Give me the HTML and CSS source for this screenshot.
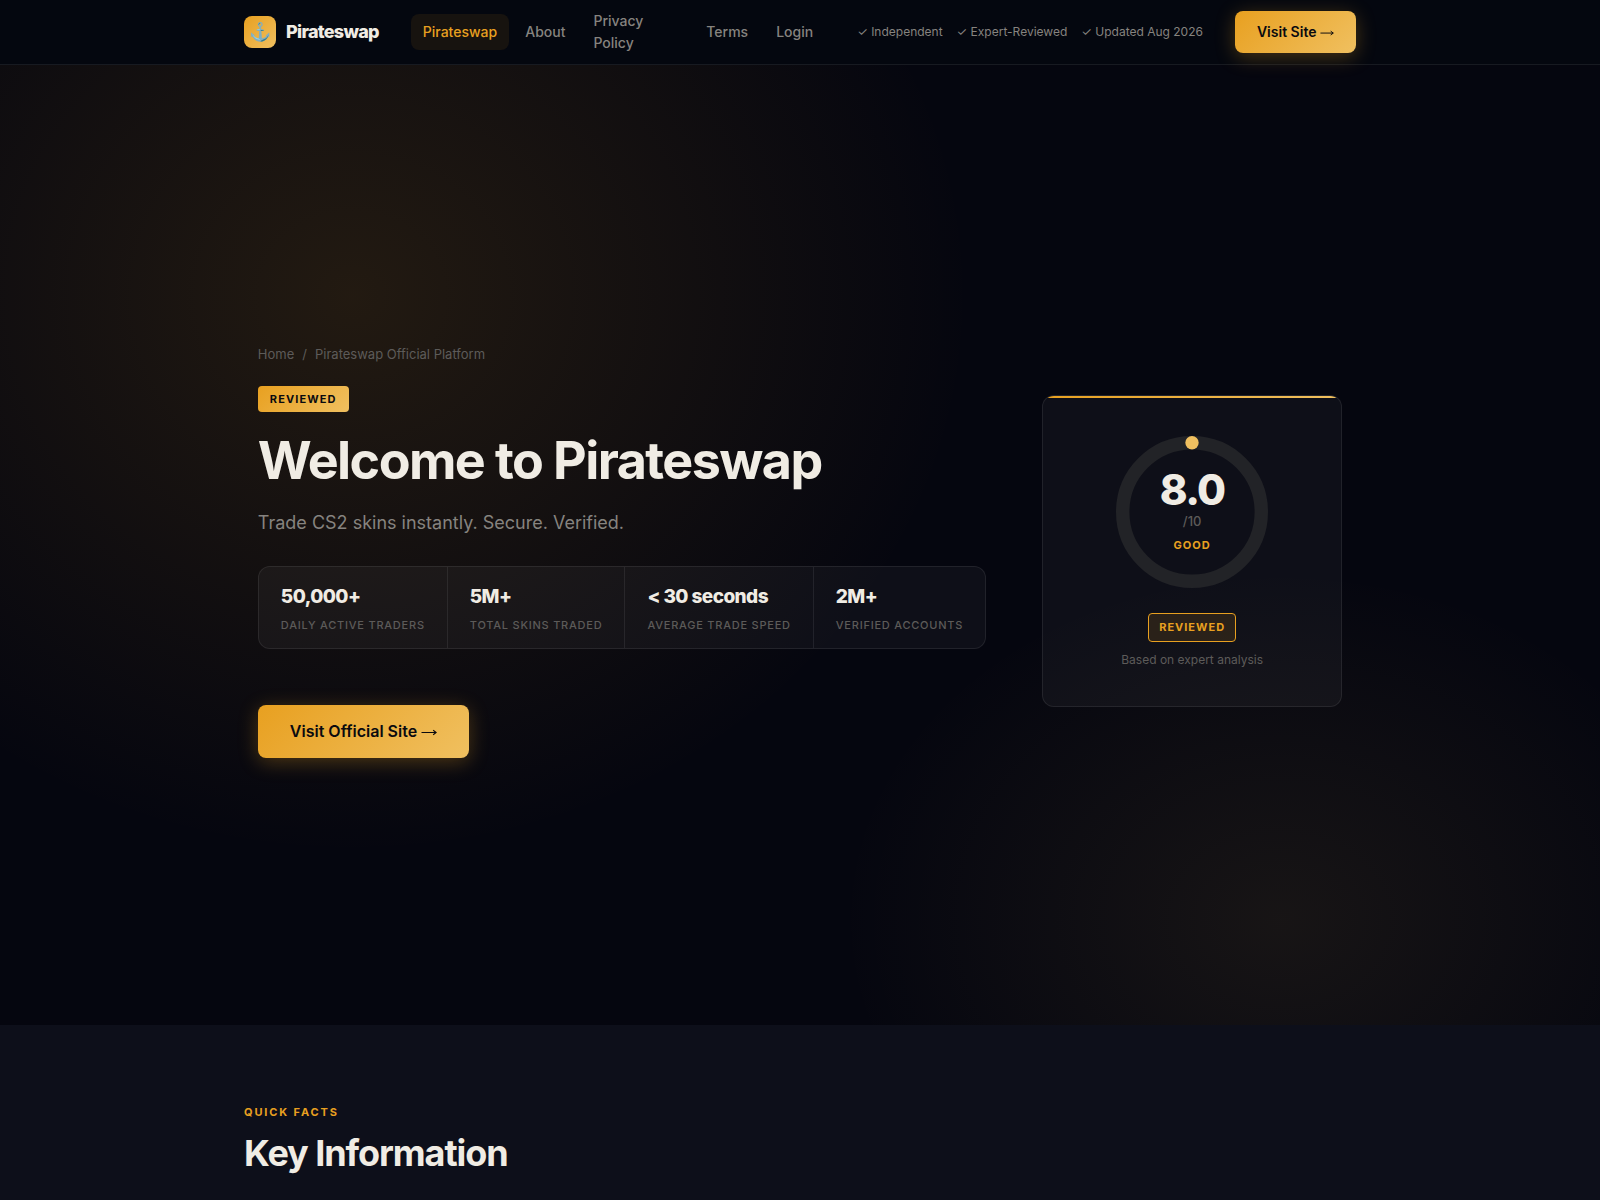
FILE: index.html
```
<!DOCTYPE html>
<html lang="en">
<head>
<meta charset="UTF-8">
<meta name="viewport" content="width=device-width, initial-scale=1.0">
<title>Pirateswap</title>
<link rel="stylesheet" href="styles.css">
</head>
<body>

<header class="site-header">
  <div class="header-inner">
    <a class="logo" href="#">
      <span class="logo-icon">⚓</span>
      <span class="logo-text">Pirateswap</span>
    </a>
    <nav class="main-nav">
      <a class="active" href="#">Pirateswap</a>
      <a href="#">About</a>
      <a href="#">Privacy Policy</a>
      <a href="#">Terms</a>
      <a href="#">Login</a>
    </nav>
    <div class="trust-items">
      <span>✓ Independent</span>
      <span>✓ Expert-Reviewed</span>
      <span>✓ Updated Aug 2026</span>
    </div>
    <a class="btn btn-small" href="#">Visit Site <svg class="arrow" viewBox="0 0 16 16" aria-hidden="true"><path d="M0.5 11.5H15M12.2 9.3L15.2 11.5L12.2 13.7"/></svg></a>
  </div>
</header>

<main>
  <section class="hero">
    <div class="hero-inner">
      <div class="hero-content">
        <nav class="breadcrumb">
          <a href="#">Home</a>
          <span>/</span>
          <span>Pirateswap Official Platform</span>
        </nav>
        <span class="badge">Reviewed</span>
        <h1>Welcome to Pirateswap</h1>
        <p class="hero-sub">Trade CS2 skins instantly. Secure. Verified.</p>
        <div class="stats">
          <div class="stat">
            <span class="stat-value">50,000+</span>
            <span class="stat-label">Daily Active Traders</span>
          </div>
          <div class="stat">
            <span class="stat-value">5M+</span>
            <span class="stat-label">Total Skins Traded</span>
          </div>
          <div class="stat">
            <span class="stat-value">&lt; 30 seconds</span>
            <span class="stat-label">Average Trade Speed</span>
          </div>
          <div class="stat">
            <span class="stat-value">2M+</span>
            <span class="stat-label">Verified Accounts</span>
          </div>
        </div>
        <a class="btn btn-large" href="#">Visit Official Site <svg class="arrow" viewBox="0 0 16 16" aria-hidden="true"><path d="M0.5 11.5H15M12.2 9.3L15.2 11.5L12.2 13.7"/></svg></a>
      </div>

      <aside class="score-card">
        <div class="score-ring">
          <svg viewBox="0 0 180 180" aria-hidden="true">
            <circle class="ring-track" cx="90" cy="90" r="69.3"/>
            <circle class="ring-dot" cx="90" cy="20.7" r="6.7"/>
          </svg>
          <div class="score-text">
            <span class="score-value">8.0</span>
            <span class="score-max">/10</span>
            <span class="score-label">Good</span>
          </div>
        </div>
        <span class="score-badge">Reviewed</span>
        <p class="score-note">Based on expert analysis</p>
      </aside>
    </div>
  </section>

  <section class="facts">
    <div class="container">
      <p class="eyebrow">Quick Facts</p>
      <h2>Key Information</h2>
    </div>
  </section>
</main>

</body>
</html>
```
FILE: styles.css
```
:root {
  --bg: #05060f;
  --bg-alt: #0d0f1a;
  --gold: #e8a020;
  --gold-light: #f0c060;
  --text: #f0ece4;
  --muted: #86837f;
  --dim: #5d5b59;
  --line: rgba(255, 255, 255, 0.08);
  --gradient: linear-gradient(135deg, #e8a020, #f0c060);
}

* {
  margin: 0;
  padding: 0;
  box-sizing: border-box;
}

body {
  font-family: Inter, "Liberation Sans", sans-serif;
  font-size: 16px;
  line-height: 1.6;
  color: var(--text);
  background: var(--bg);
}

a {
  color: inherit;
  text-decoration: none;
}

/* Header */
.site-header {
  position: sticky;
  top: 0;
  z-index: 10;
  background: #04070f;
  border-bottom: 1px solid var(--line);
}

.header-inner {
  display: flex;
  align-items: center;
  gap: 32px;
  max-width: 1160px;
  height: 64px;
  margin: 0 auto;
  padding: 0 24px;
}

.logo {
  display: flex;
  align-items: center;
  gap: 10px;
  flex-shrink: 0;
}

.logo-icon {
  display: flex;
  align-items: center;
  justify-content: center;
  width: 32px;
  height: 32px;
  border-radius: 8px;
  background: var(--gradient);
  font-size: 18px;
}

.logo-text {
  font-size: 18px;
  font-weight: 800;
  letter-spacing: -0.04em;
}

.main-nav {
  display: flex;
  align-items: center;
  gap: 4px;
  flex: 1;
}

.main-nav a {
  padding: 7px 12px;
  border-radius: 8px;
  font-size: 14px;
  font-weight: 500;
  line-height: 22px;
  color: var(--muted);
}

.main-nav .active {
  color: var(--gold);
  background: #17130f;
}

.trust-items {
  display: flex;
  gap: 14px;
  flex-shrink: 0;
  font-size: 12px;
  color: var(--muted);
}

.btn {
  display: inline-block;
  flex-shrink: 0;
  border-radius: 8px;
  background: var(--gradient);
  color: #0a0a0f;
  font-weight: 600;
  white-space: nowrap;
  box-shadow: 0 4px 20px rgba(232, 160, 32, 0.3);
}

.btn-small {
  padding: 10px 22px;
  font-size: 14px;
}

.btn-large {
  padding: 14px 32px;
  font-size: 16px;
}

/* thin arrow after the button text */
.arrow {
  width: 1em;
  height: 1em;
  vertical-align: baseline;
  fill: none;
  stroke: currentColor;
  stroke-width: 1.1;
}

/* Hero */
.hero {
  display: flex;
  align-items: center;
  justify-content: center;
  min-height: 80vh;
  padding: 92px 24px 80px;
  background:
    radial-gradient(620px 560px at 22% 24%, rgba(232, 160, 32, 0.13), transparent),
    radial-gradient(440px 350px at 80% 89%, rgba(240, 192, 96, 0.08), transparent),
    var(--bg);
}

.hero-inner {
  display: flex;
  align-items: center;
  gap: 56px;
}

.breadcrumb {
  display: flex;
  gap: 8px;
  margin-bottom: 20px;
  font-size: 13px;
  color: var(--dim);
}

.badge {
  display: inline-block;
  margin-bottom: 20px;
  padding: 4px 12px;
  border-radius: 4px;
  background: var(--gradient);
  color: #0a0a0f;
  font-size: 11px;
  font-weight: 700;
  line-height: 18px;
  letter-spacing: 0.1em;
  text-transform: uppercase;
}

h1 {
  margin-bottom: 20px;
  font-size: 52px;
  font-weight: 700;
  line-height: 1.1;
  letter-spacing: -0.03em;
}

.hero-sub {
  margin-bottom: 28px;
  font-size: 18px;
  color: var(--muted);
}

.stats {
  display: flex;
  margin-bottom: 56px;
  border: 1px solid var(--line);
  border-radius: 12px;
  background: rgba(255, 255, 255, 0.04);
}

.stat {
  display: flex;
  flex-direction: column;
  gap: 3px;
  padding: 14px 22px;
}

.stat + .stat {
  border-left: 1px solid var(--line);
}

.stat-value {
  font-size: 19px;
  font-weight: 800;
  line-height: 32px;
  letter-spacing: -0.03em;
}

.stat-label {
  font-size: 11px;
  font-weight: 500;
  line-height: 18px;
  letter-spacing: 0.07em;
  text-transform: uppercase;
  color: var(--dim);
}

/* Score card */
.score-card {
  position: relative;
  display: flex;
  flex-direction: column;
  align-items: center;
  width: 300px;
  padding: 26px 24px 37px;
  border: 1px solid var(--line);
  border-radius: 12px;
  background: rgba(255, 255, 255, 0.04);
  overflow: hidden;
}

.score-card::before {
  content: "";
  position: absolute;
  top: 0;
  left: 0;
  right: 0;
  height: 2px;
  background: var(--gradient);
}

.score-ring {
  display: grid;
  place-items: center;
  margin-bottom: 11px;
}

.score-ring svg,
.score-text {
  grid-area: 1 / 1;
}

.score-ring svg {
  width: 180px;
  height: 180px;
}

.ring-track {
  fill: none;
  stroke: #222327;
  stroke-width: 13.4;
}

.ring-dot {
  fill: var(--gold-light);
}

.score-text {
  display: flex;
  flex-direction: column;
  align-items: center;
}

.score-value {
  font-size: 42px;
  font-weight: 800;
  line-height: 1;
  letter-spacing: -0.04em;
}

.score-max {
  font-size: 13px;
  font-weight: 500;
  color: var(--dim);
}

.score-label {
  margin-top: 5px;
  font-size: 11px;
  font-weight: 700;
  letter-spacing: 1px;
  text-transform: uppercase;
  color: var(--gold);
}

.score-badge {
  margin-bottom: 8px;
  padding: 5px 10px;
  border: 1px solid var(--gold);
  border-radius: 4px;
  background: rgba(232, 160, 32, 0.12);
  font-size: 11px;
  font-weight: 700;
  line-height: 17px;
  letter-spacing: 1px;
  text-transform: uppercase;
  color: var(--gold);
}

.score-note {
  font-size: 12px;
  color: var(--dim);
}

/* Facts */
.facts {
  padding: 79px 0 48px;
  background: var(--bg-alt);
}

.container {
  max-width: 1160px;
  margin: 0 auto;
  padding: 0 24px;
}

.eyebrow {
  margin-bottom: 8px;
  font-size: 11px;
  font-weight: 700;
  letter-spacing: 0.17em;
  text-transform: uppercase;
  color: var(--gold);
}

h2 {
  font-size: 36px;
  font-weight: 700;
  line-height: 1.3;
  letter-spacing: -0.03em;
}
```
